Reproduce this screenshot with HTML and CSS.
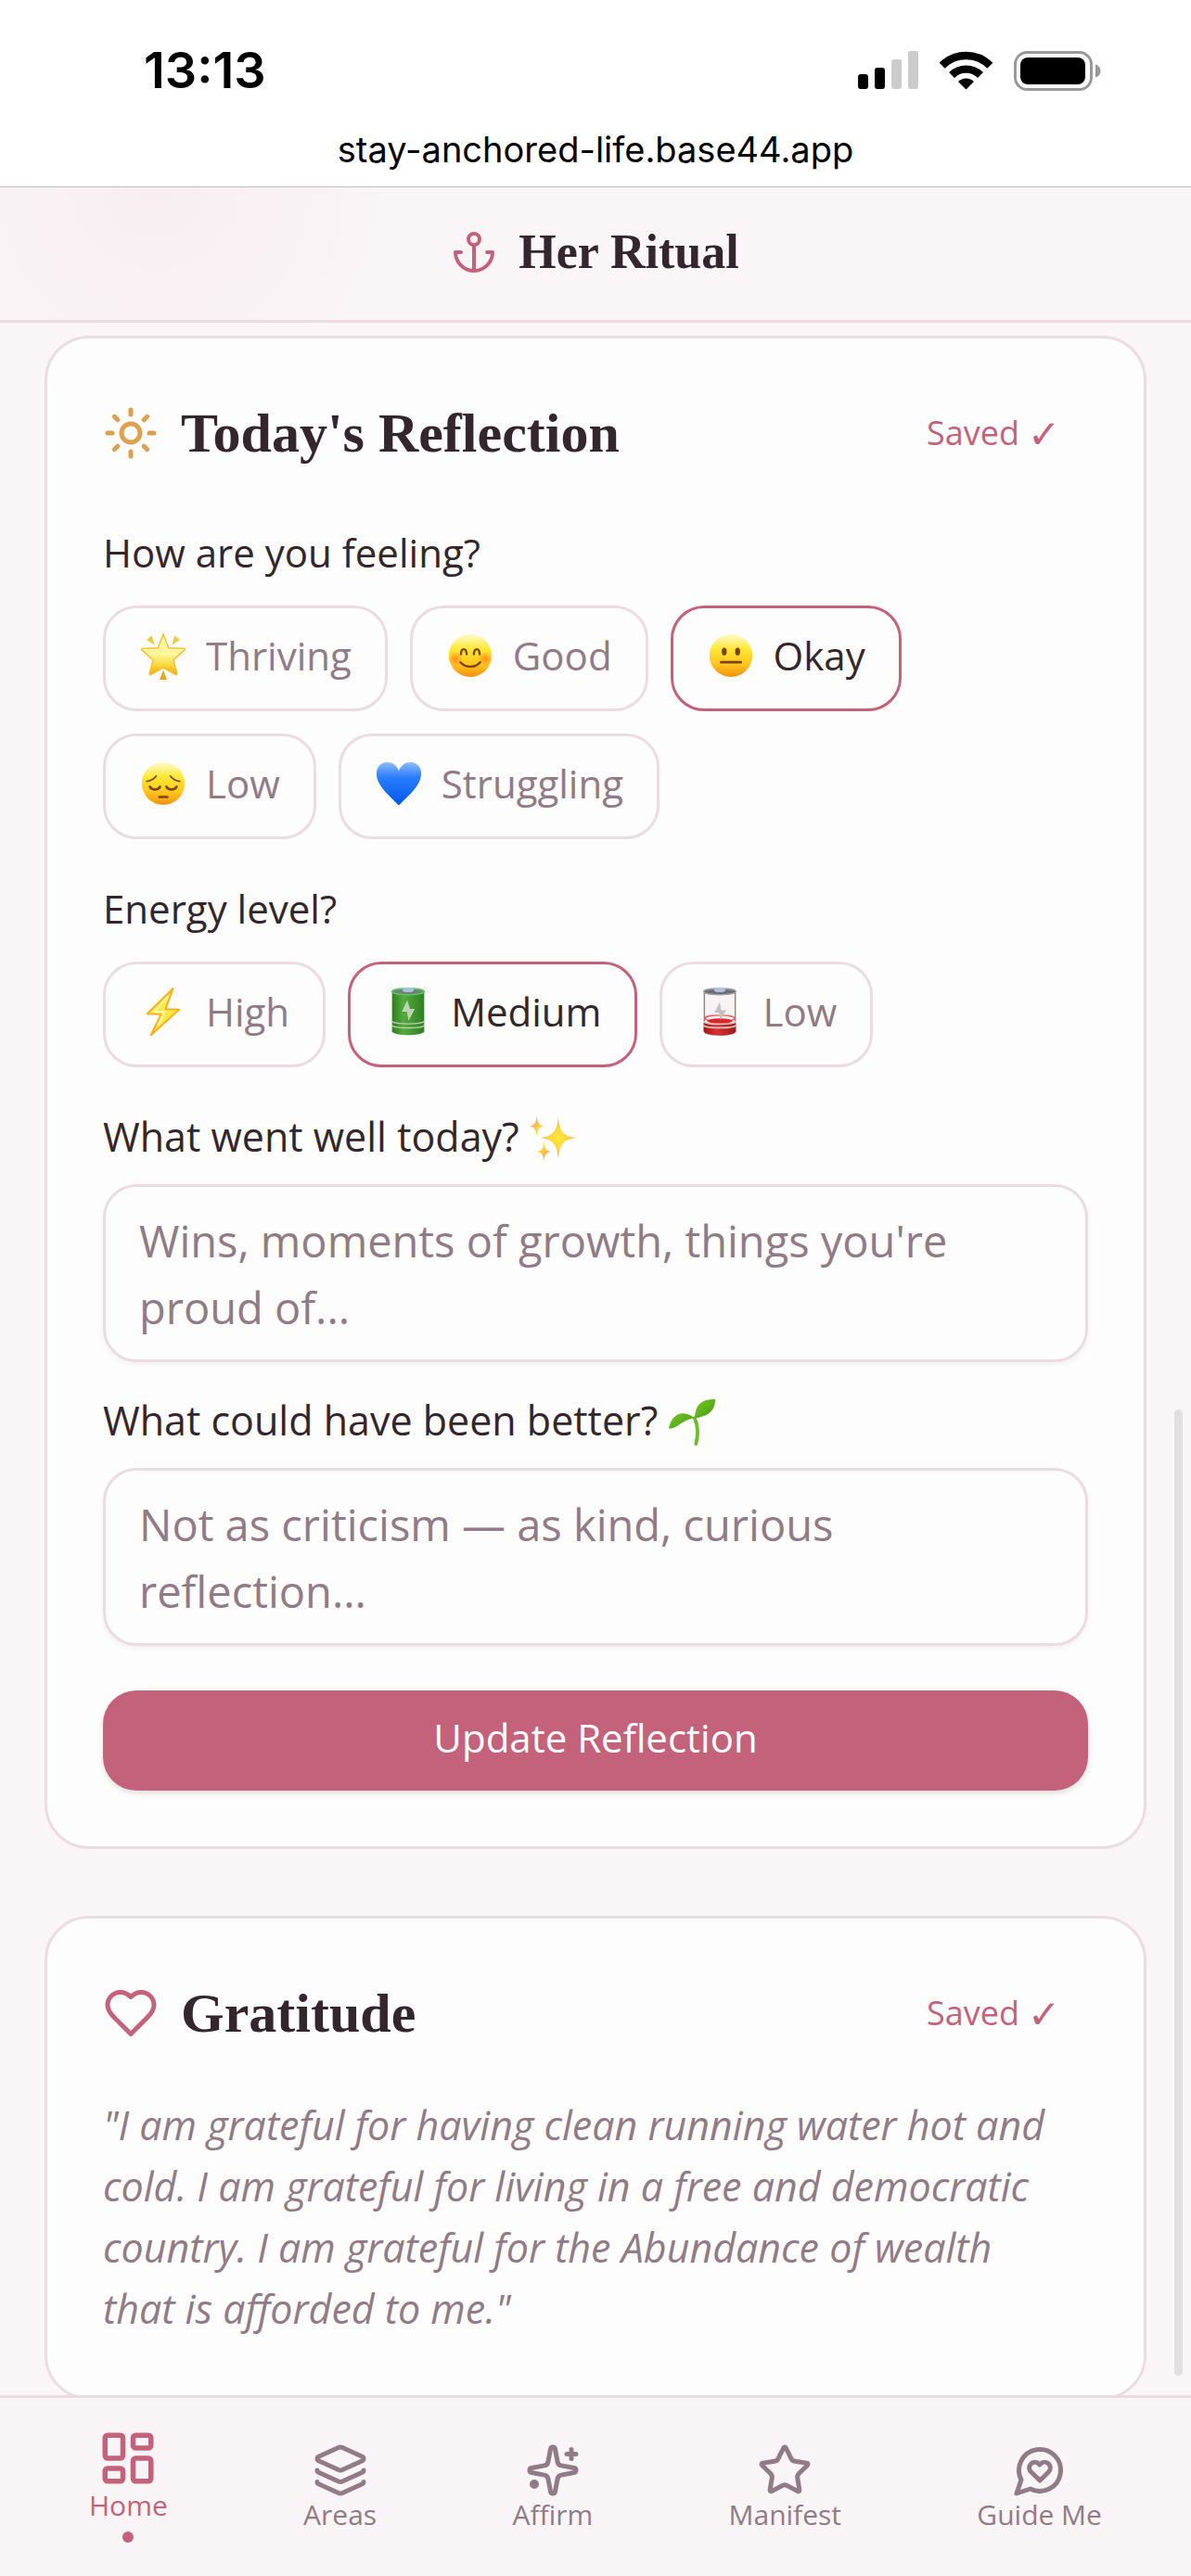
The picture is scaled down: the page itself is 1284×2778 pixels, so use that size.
FILE: index.html
```html
<!DOCTYPE html>
<html lang="en">
<head>
    <meta charset="UTF-8">
    <meta name="viewport" content="width=device-width, initial-scale=1.0">
    <title>Her Ritual</title>
    <link rel="stylesheet" href="styles.css">
</head>
<body>

    <!-- shared gradients for the emoji -->
    <svg class="defs" width="0" height="0" aria-hidden="true">
        <defs>
            <linearGradient id="face" x1="0" y1="0" x2="0" y2="1">
                <stop offset="0" stop-color="#fffbd0"/>
                <stop offset="0.35" stop-color="#ffe733"/>
                <stop offset="0.7" stop-color="#ffc61f"/>
                <stop offset="1" stop-color="#f48f0c"/>
            </linearGradient>
            <radialGradient id="blush">
                <stop offset="0" stop-color="#ff7a1a" stop-opacity="0.8"/>
                <stop offset="1" stop-color="#ff7a1a" stop-opacity="0"/>
            </radialGradient>
            <linearGradient id="star" x1="0" y1="0" x2="0" y2="1">
                <stop offset="0" stop-color="#fff7a8"/>
                <stop offset="0.5" stop-color="#fff59a"/>
                <stop offset="0.8" stop-color="#fdd32e"/>
                <stop offset="1" stop-color="#eda21c"/>
            </linearGradient>
            <linearGradient id="blue" x1="0" y1="0" x2="0" y2="1">
                <stop offset="0" stop-color="#8fbcff"/>
                <stop offset="0.35" stop-color="#2b7dfb"/>
                <stop offset="1" stop-color="#0057f0"/>
            </linearGradient>
            <linearGradient id="green" x1="0" y1="0" x2="1" y2="0">
                <stop offset="0" stop-color="#2f7d22"/>
                <stop offset="0.35" stop-color="#55ab3c"/>
                <stop offset="1" stop-color="#2f7f24"/>
            </linearGradient>
            <linearGradient id="red" x1="0" y1="0" x2="1" y2="0">
                <stop offset="0" stop-color="#a81414"/>
                <stop offset="0.4" stop-color="#dd3030"/>
                <stop offset="1" stop-color="#a81818"/>
            </linearGradient>
            <radialGradient id="gold">
                <stop offset="0" stop-color="#ffe838"/>
                <stop offset="0.5" stop-color="#ffd640"/>
                <stop offset="1" stop-color="#fba558"/>
            </radialGradient>
            <linearGradient id="leaf" x1="0" y1="0" x2="1" y2="1">
                <stop offset="0" stop-color="#7cc92a"/>
                <stop offset="1" stop-color="#3f9a0c"/>
            </linearGradient>
        </defs>
    </svg>

    <div class="browser-bar">
        <div class="status">
            <span class="time">13:13</span>
            <div class="status-icons">
                <svg width="65" height="42" viewBox="0 0 65 42">
                    <rect x="0" y="25" width="11" height="16" rx="3"/>
                    <rect x="18" y="18" width="11" height="23" rx="3"/>
                    <rect x="36" y="9" width="11" height="32" rx="3" fill="#cbcbcb"/>
                    <rect x="54" y="0" width="11" height="41" rx="3" fill="#cbcbcb"/>
                </svg>
                <svg width="57" height="42" viewBox="0 0 57 42">
                    <path d="M2.7 15.7A36.5 36.5 0 0 1 54.3 15.7" fill="none" stroke="#000" stroke-width="8.6"/>
                    <path d="M13 26A22 22 0 0 1 44 26" fill="none" stroke="#000" stroke-width="8.4"/>
                    <path d="M28.5 41.5L20 33A12 12 0 0 1 37 33Z"/>
                </svg>
                <svg width="94" height="43" viewBox="0 0 94 43">
                    <rect x="1.5" y="1.5" width="82" height="40" rx="13" fill="none" stroke="#999" stroke-width="3"/>
                    <rect x="7" y="7" width="70" height="29" rx="8"/>
                    <path d="M88 14.5C91.5 15.5 93.5 18 93.5 21.5S91.5 27.5 88 28.5Z" fill="#999"/>
                </svg>
            </div>
        </div>
        <div class="url">stay-anchored-life.base44.app</div>
    </div>

    <header class="header">
        <svg class="icon anchor" viewBox="0 0 24 24">
            <circle cx="12" cy="5" r="3"/>
            <path d="M12 22V8"/>
            <path d="M5 12H2a10 10 0 0 0 20 0h-3"/>
        </svg>
        <h1>Her Ritual</h1>
    </header>

    <main>
        <section class="card">
            <div class="card-head">
                <svg class="icon sun" viewBox="0 0 24 24">
                    <circle cx="12" cy="12" r="4"/>
                    <path d="M12 2v2M12 20v2M4.93 4.93l1.41 1.41M17.66 17.66l1.41 1.41M2 12h2M20 12h2M6.34 17.66l-1.41 1.41M19.07 4.93l-1.41 1.41"/>
                </svg>
                <h2>Today's Reflection</h2>
                <button class="saved">Saved <span class="tick">✓</span></button>
            </div>

            <p class="question">How are you feeling?</p>
            <div class="chips">
                <button class="chip">
                    <svg class="emoji" viewBox="0 0 54 54">
                        <path d="M27 3l6 15.500 17.500.6c1 .3 1 1 .4 1.700L38.500 32l4 15.500c0 1-.7 1.300-1.500.9L27 40.500l-14 7.900c-.8.4-1.500.1-1.500-.9l4-15.500L3.200 20.800c-.6-.7-.6-1.400.4-1.700L21 18.500z" fill="url(#star)" stroke="#f6c12c" stroke-width="1.500"/>
                        <path d="M14 4.500l3.500 10.500-9-5.500zM40 4.500l-3.500 10.500 9-5.500z" fill="#eecb3a"/>
                        <path d="M27 43l4 11h-8z" fill="#eba51f"/>
                    </svg>
                    Thriving
                </button>
                <button class="chip">
                    <svg class="emoji" viewBox="0 0 54 54">
                        <circle cx="27" cy="27" r="24" fill="url(#face)"/>
                        <circle cx="10.500" cy="30.500" r="8" fill="url(#blush)"/>
                        <circle cx="43.500" cy="30.500" r="8" fill="url(#blush)"/>
                        <path d="M16.500 25.500c.5-7.500 6-7.500 6.500 0M31 25.500c.5-7.500 6-7.500 6.500 0M16 34.500c5.500 6.500 16.500 6.500 22 0" fill="none" stroke="#7c4407" stroke-width="2.400" stroke-linecap="round"/>
                    </svg>
                    Good
                </button>
                <button class="chip active">
                    <svg class="emoji" viewBox="0 0 54 54">
                        <circle cx="27" cy="27" r="24" fill="url(#face)"/>
                        <ellipse cx="19.500" cy="22.500" rx="2.800" ry="4.300" fill="#7c4407"/>
                        <ellipse cx="34.500" cy="22.500" rx="2.800" ry="4.300" fill="#7c4407"/>
                        <path d="M16 34.500h22" stroke="#7c4407" stroke-width="2.800" stroke-linecap="round"/>
                    </svg>
                    Okay
                </button>
                <button class="chip">
                    <svg class="emoji" viewBox="0 0 54 54">
                        <circle cx="27" cy="27" r="24" fill="url(#face)"/>
                        <path d="M8.500 24.500c4.500-.6 8-2.600 10.500-5.800M45.500 24.500c-4.500-.6-8-2.600-10.500-5.800" fill="none" stroke="#7c4407" stroke-width="1.800" stroke-linecap="round"/>
                        <path d="M12 30.500c2 4.200 9.500 4.200 11.500 0M30.500 30.500c2 4.200 9.500 4.200 11.500 0M22.500 42h9" fill="none" stroke="#7c4407" stroke-width="2.600" stroke-linecap="round"/>
                    </svg>
                    Low
                </button>
                <button class="chip">
                    <svg class="emoji" viewBox="0 0 54 54">
                        <path d="M27 51.500C17 40.500 2 30 2 15.500 2 8 7.500 3 14 3c6 0 10.500 3.500 13 9.500C29.500 6.500 34 3 40 3c6.500 0 12 5 12 12.500C52 30 37 40.500 27 51.500z" fill="url(#blue)"/>
                    </svg>
                    Struggling
                </button>
            </div>

            <p class="question">Energy level?</p>
            <div class="chips">
                <button class="chip">
                    <svg class="emoji" viewBox="0 0 54 54">
                        <path d="M38 1L9 29.500l15.500.5L13 53.500 45 24.500 29.500 24z" fill="#ffe845" stroke="#fdae14" stroke-width="2" stroke-linejoin="round"/>
                        <path d="M33 9L17 27l11.500.3L21 43" fill="none" stroke="#fff9b0" stroke-width="2"/>
                    </svg>
                    High
                </button>
                <button class="chip active">
                    <svg class="emoji" viewBox="0 0 54 54">
                        <path d="M9 4v45c2 5.500 34 5.500 36 0V4z" fill="url(#green)"/>
                        <ellipse cx="27" cy="4.500" rx="18" ry="3.500" fill="#6f7f78" stroke="#58c864" stroke-width="1.500"/>
                        <ellipse cx="27" cy="2.800" rx="6.500" ry="2.500" fill="#a9c3df"/>
                        <path d="M9 38c3 3.500 33 3.500 36 0M9 42.500c3 3.500 33 3.500 36 0" fill="none" stroke="#b9cdb2" stroke-width="1.500"/>
                        <path d="M26 14l-6 13h5.500l2 10 7-13h-5.500z" fill="#bcd3b4"/>
                    </svg>
                    Medium
                </button>
                <button class="chip">
                    <svg class="emoji" viewBox="0 0 54 54">
                        <path d="M9.700 4v45c2 5.500 32.600 5.500 34.600 0V4z" fill="#f7f3f4" stroke="#93827f" stroke-width="1.500"/>
                        <path d="M9 40v9c2 5.500 34 5.500 36 0v-9z" fill="url(#red)"/>
                        <ellipse cx="27" cy="34.500" rx="16.500" ry="3.500" fill="none" stroke="#f25a5a" stroke-width="1.500"/>
                        <ellipse cx="27" cy="37.500" rx="14" ry="3" fill="#e02626"/>
                        <path d="M9 38c3 4 33 4 36 0M9 42.500c3 3.500 33 3.500 36 0" fill="none" stroke="#d5c8c6" stroke-width="1.800"/>
                        <ellipse cx="27" cy="4.500" rx="18" ry="3.500" fill="#6c6c72" stroke="#a39d9d" stroke-width="1.500"/>
                        <ellipse cx="27" cy="2.800" rx="6.500" ry="2.500" fill="#a9c3df"/>
                        <path d="M27 16l-6 12h5l1.500 8 7-10.500h-6z" fill="#c2c0c0"/>
                    </svg>
                    Low
                </button>
            </div>

            <label for="well">What went well today?
                <svg class="emoji" viewBox="0 0 54 54">
                    <path d="M32 3c1.500 15 5 21 20 23-15 2-18.500 8-20 24-1.500-16-5-22-20-24 15-2 18.500-8 20-23z" fill="url(#gold)"/>
                    <path d="M8 2c.8 7 2.500 10 8 11-5.500 1-7.200 4-8 11.500C7.200 17 5.500 14 0 13c5.500-1 7.200-4 8-11zM16 31c.7 7 2.300 9.500 7.500 10.500-5.200 1-6.800 3.500-7.500 10.500-.7-7-2.300-9.500-7.500-10.500C13.700 40.500 15.300 38 16 31z" fill="url(#gold)"/>
                </svg>
            </label>
            <textarea id="well" rows="2" placeholder="Wins, moments of growth, things you're proud of..."></textarea>

            <label for="better">What could have been better?
                <svg class="emoji" viewBox="0 0 54 54">
                    <path d="M30 22c4 9 4.500 18 1.500 29" fill="none" stroke="#6bbf2e" stroke-width="4" stroke-linecap="round"/>
                    <path d="M30 22C31 8 36 1 53 1c0 13-8 19-22 21z" fill="url(#leaf)"/>
                    <path d="M30 22C17 12 4 17 1 34c12-1 12-9 29-12z" fill="url(#leaf)"/>
                </svg>
            </label>
            <textarea id="better" rows="2" placeholder="Not as criticism — as kind, curious reflection..."></textarea>

            <button class="update">Update Reflection</button>
        </section>

        <section class="card">
            <div class="card-head">
                <svg class="icon heart" viewBox="0 0 24 24">
                    <path d="M19 14c1.490-1.460 3-3.210 3-5.500A5.500 5.500 0 0 0 16.500 3c-1.760 0-3 .5-4.500 2-1.500-1.500-2.740-2-4.500-2A5.500 5.500 0 0 0 2 8.500c0 2.300 1.500 4.050 3 5.500l7 7Z"/>
                </svg>
                <h2>Gratitude</h2>
                <button class="saved">Saved <span class="tick">✓</span></button>
            </div>
            <p class="entry">"I am grateful for having clean running water hot and cold. I am grateful for living in a free and democratic country. I am grateful for the Abundance of wealth that is afforded to me."</p>
        </section>

        <div class="scrollbar"></div>
    </main>

    <nav>
        <a href="#" class="active">
            <svg class="icon" viewBox="0 0 24 24">
                <rect x="3" y="3" width="7" height="9" rx="1"/>
                <rect x="14" y="3" width="7" height="5" rx="1"/>
                <rect x="14" y="12" width="7" height="9" rx="1"/>
                <rect x="3" y="16" width="7" height="5" rx="1"/>
            </svg>
            <span>Home</span>
            <i class="dot"></i>
        </a>
        <a href="#">
            <svg class="icon" viewBox="0 0 24 24">
                <path d="M12.83 2.18a2 2 0 0 0-1.66 0L2.6 6.08a1 1 0 0 0 0 1.83l8.58 3.91a2 2 0 0 0 1.66 0l8.58-3.9a1 1 0 0 0 0-1.83z"/>
                <path d="M2 12a1 1 0 0 0 .58.91l8.6 3.91a2 2 0 0 0 1.65 0l8.58-3.9A1 1 0 0 0 22 12"/>
                <path d="M2 17a1 1 0 0 0 .58.91l8.6 3.91a2 2 0 0 0 1.65 0l8.58-3.9A1 1 0 0 0 22 17"/>
            </svg>
            <span>Areas</span>
        </a>
        <a href="#">
            <svg class="icon" viewBox="0 0 24 24">
                <path d="M11.017 2.814a1 1 0 0 1 1.966 0l1.051 5.558a2 2 0 0 0 1.594 1.594l5.558 1.051a1 1 0 0 1 0 1.966l-5.558 1.051a2 2 0 0 0-1.594 1.594l-1.051 5.558a1 1 0 0 1-1.966 0l-1.051-5.558a2 2 0 0 0-1.594-1.594l-5.558-1.051a1 1 0 0 1 0-1.966l5.558-1.051a2 2 0 0 0 1.594-1.594z"/>
                <path d="M20 3v4M22 5h-4"/>
                <circle cx="4" cy="18" r="1"/>
            </svg>
            <span>Affirm</span>
        </a>
        <a href="#">
            <svg class="icon" viewBox="0 0 24 24">
                <path d="M11.525 2.295a.53.53 0 0 1 .95 0l2.31 4.679a2.123 2.123 0 0 0 1.595 1.16l5.166.756a.53.53 0 0 1 .294.904l-3.736 3.638a2.123 2.123 0 0 0-.611 1.878l.882 5.14a.53.53 0 0 1-.771.56l-4.618-2.428a2.122 2.122 0 0 0-1.973 0L6.396 21.01a.53.53 0 0 1-.77-.56l.881-5.139a2.122 2.122 0 0 0-.611-1.879L2.16 9.795a.53.53 0 0 1 .294-.906l5.165-.755a2.122 2.122 0 0 0 1.597-1.16z"/>
            </svg>
            <span>Manifest</span>
        </a>
        <a href="#">
            <svg class="icon" viewBox="0 0 24 24">
                <path d="M7.9 20A9 9 0 1 0 4 16.1L2 22Z"/>
                <path d="M15.8 9.2a2.5 2.5 0 0 0-3.5 0l-.3.4-.35-.3a2.42 2.42 0 1 0-3.2 3.6l3.6 3.5 3.6-3.5c1.2-1.2 1.1-2.7.15-3.7"/>
            </svg>
            <span>Guide Me</span>
        </a>
    </nav>

</body>
</html>
```
FILE: styles.css
```css
* {
    box-sizing: border-box;
}
body {
    margin: 0;
    height: 100vh;
    display: flex;
    flex-direction: column;
    background-color: #faf6f8;
    color: #33262c;
    font-family: "Open Sans", sans-serif;
    font-size: 42px;
    line-height: 60px;
}
h1, h2, p {
    margin: 0;
}
h1, h2 {
    font-family: "Liberation Serif", serif;
    font-weight: bold;
}
button, textarea {
    font-family: inherit;
    font-size: 42px;
    line-height: 60px;
    color: inherit;
    background: none;
    border: none;
    margin: 0;
    padding: 0;
}
button {
    cursor: pointer;
}
.defs {
    position: absolute;
}
.icon {
    width: 60px;
    height: 60px;
    fill: none;
    stroke: currentColor;
    stroke-width: 2;
    stroke-linecap: round;
    stroke-linejoin: round;
}

/* phone status bar and address */
.browser-bar {
    background-color: #fff;
    color: #000;
    font-family: Inter, sans-serif;
    padding-top: 45px;
    border-bottom: 1px solid #c5bcc0;
}
.status {
    display: flex;
    justify-content: space-between;
    align-items: center;
    height: 62px;
    padding: 0 97px 0 155px;
}
.time {
    font-size: 54px;
    font-weight: 600;
}
.status-icons {
    display: flex;
    gap: 23px;
}
.url {
    height: 94px;
    padding-top: 24px;
    text-align: center;
    font-size: 38px;
}

.header {
    display: flex;
    justify-content: center;
    align-items: center;
    gap: 24px;
    height: 146px;
    padding-bottom: 3px;
    border-bottom: 3px solid #ebdce1;
    background: radial-gradient(circle at 13% 0, #f8eef1, #faf5f7 260px);
}
.header h1 {
    font-size: 52px;
}
.anchor {
    width: 48px;
    height: 48px;
    color: #c4627b;
}

main {
    flex: 1;
    min-height: 0;
    overflow: hidden;
    position: relative;
    padding: 14px 48px 0;
}
.card {
    background-color: #fdfdfd;
    border: 3px solid #ebdce1;
    border-radius: 48px;
    padding: 60px;
    margin-bottom: 72px;
}
.card-head {
    display: flex;
    align-items: center;
    gap: 24px;
    height: 84px;
    margin-bottom: 45px;
}
.card-head h2 {
    flex: 1;
    font-size: 60px;
}
.sun {
    color: #dca04e;
}
.heart {
    color: #c4627b;
}
.saved {
    display: flex;
    gap: 9px;
    font-size: 36px;
    color: #c4627b;
    padding: 0 30px;
}
.tick {
    font-size: 42px;
}

.question {
    margin: 45px 0 27px;
}
.card-head + .question {
    margin-top: 57px;
}
.chips {
    display: flex;
    flex-wrap: wrap;
    gap: 24px;
}
.chip {
    display: flex;
    align-items: center;
    gap: 20px;
    padding: 21px 36px 27px;
    border: 3px solid #ebdce1;
    border-radius: 36px;
    color: #917b86;
}
.chip.active {
    border-color: #c4627b;
    color: #33262c;
}
.emoji {
    width: 52px;
    height: 52px;
}

label {
    display: block;
    height: 60px;
    margin: 33px 0 21px;
    font-size: 43px;
}
label .emoji {
    vertical-align: -12px;
}
.chips + label {
    margin-top: 45px;
}
textarea {
    display: block;
    width: 100%;
    height: 192px;
    padding: 22px 36px;
    font-size: 47px;
    line-height: 72px;
    border: 3px solid #ebdce1;
    border-radius: 36px;
    box-shadow: 0 3px 6px rgba(0, 0, 0, 0.05);
    resize: none;
    overflow: hidden;
}
textarea::placeholder {
    color: #917b86;
}
.update {
    width: 100%;
    height: 108px;
    margin-top: 48px;
    padding-bottom: 6px;
    border-radius: 36px;
    background-color: #c4627b;
    color: #fdfdfd;
    box-shadow: 0 3px 6px rgba(0, 0, 0, 0.12);
}
.entry {
    padding: 1px 36px 2px 0;
    font-size: 43px;
    line-height: 66px;
    font-style: italic;
    color: #917b86;
}

.scrollbar {
    position: absolute;
    right: 9px;
    bottom: 21px;
    width: 9px;
    height: 1042px;
    border-radius: 5px;
    background-color: #e3dfe1;
}

nav {
    display: flex;
    justify-content: space-between;
    align-items: center;
    padding: 32px 96px 36px;
    border-top: 3px solid #ebdce1;
    background-color: #f9f5f7;
}
nav a {
    display: flex;
    flex-direction: column;
    align-items: center;
    padding-top: 4px;
    font-size: 30px;
    line-height: 36px;
    color: #917b86;
    text-decoration: none;
}
nav a.active {
    padding-top: 0;
    color: #c4627b;
}
nav a.active .icon {
    width: 66px;
    height: 66px;
}
.dot {
    width: 12px;
    height: 12px;
    margin-top: 10px;
    border-radius: 50%;
    background-color: #c4627b;
}
```
